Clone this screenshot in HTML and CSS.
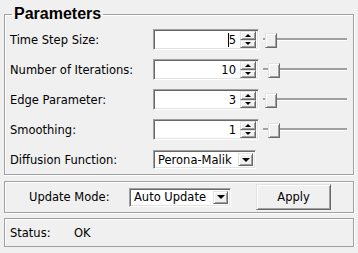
FILE: index.html
```html
<!DOCTYPE html>
<html>

<head>
    <meta content="text/html; charset=utf-8" http-equiv="Content-Type">
    <title>Diffusion filter</title>
    <link rel="stylesheet" href="styles.css">
</head>

<body>
    <div class="panel">
        <fieldset class="params">
            <legend>Parameters</legend>
            <div class="paramGrid">
                <label>Time Step Size:</label>
                <div class="spin"><span class="caret"></span><span class="val">5</span><span class="arrows"><b class="up"></b><b class="down"></b></span></div>
                <div class="slider"><span class="thumb" style="margin-left:2px"></span></div>

                <label>Number of Iterations:</label>
                <div class="spin"><span class="val">10</span><span class="arrows"><b class="up"></b><b class="down"></b></span></div>
                <div class="slider"><span class="thumb" style="margin-left:5px"></span></div>

                <label>Edge Parameter:</label>
                <div class="spin"><span class="val">3</span><span class="arrows"><b class="up"></b><b class="down"></b></span></div>
                <div class="slider"><span class="thumb" style="margin-left:2px"></span></div>

                <label>Smoothing:</label>
                <div class="spin"><span class="val">1</span><span class="arrows"><b class="up"></b><b class="down"></b></span></div>
                <div class="slider"><span class="thumb" style="margin-left:5px"></span></div>

                <label>Diffusion Function:</label>
                <div class="combo funcCombo"><span class="comboText">Perona-Malik</span><b class="drop"></b></div>
            </div>
        </fieldset>

        <div class="frame updateBar">
            <span class="updateLabel">Update Mode:</span>
            <div class="combo modeCombo"><span class="comboText">Auto Update</span><b class="drop"></b></div>
            <button class="applyBtn">Apply</button>
        </div>

        <div class="frame statusBar">
            <span class="statusLabel">Status:</span>
            <span>OK</span>
        </div>
    </div>
</body>

</html>
```

FILE: styles.css
```css
body {
    margin: 0;
    padding: 5px 0 0 4px;
    background: #f0f0f0;
    font-family: "DejaVu Sans", sans-serif;
    font-size: 11.5px;
    color: #000;
}

.panel {
    width: 350px;
}

/* group box */
.params {
    margin: 0;
    padding: 6px 5px 4px 5px;
    border: 1px solid #a0a0a0;
    box-shadow: inset 1px 1px #fff, 1px 1px #fff;
}

.params legend {
    margin-left: 2px;
    padding: 0 2px;
    font-family: "Liberation Sans", Arial, sans-serif;
    font-weight: bold;
    font-size: 16px;
    line-height: 18px;
}

.paramGrid {
    display: grid;
    grid-template-columns: 139px 106px 84px;
    grid-auto-rows: 21px;
    row-gap: 9px;
    column-gap: 4px;
    align-items: center;
}

.paramGrid label {
    grid-column: 1;
}

/* sunken edit field */
.spin,
.combo {
    box-sizing: border-box;
    background: #fff;
    border: 1px solid;
    border-color: #a0a0a0 #fff #fff #a0a0a0;
    box-shadow: inset 1px 1px #696969, inset -1px -1px #e3e3e3;
    display: flex;
    align-items: center;
}

.spin {
    width: 106px;
    height: 21px;
    padding: 2px;
    justify-content: flex-end;
}

.spin .val {
    margin-right: 4px;
}

.caret {
    width: 1px;
    height: 14px;
    background: #000;
}

.arrows {
    display: flex;
    flex-direction: column;
    width: 16px;
    height: 17px;
}

.arrows b,
.drop,
.thumb,
.applyBtn {
    box-sizing: border-box;
    background: #f0f0f0;
    border: 1px solid;
    border-color: #e3e3e3 #696969 #696969 #e3e3e3;
    box-shadow: inset 1px 1px #fff, inset -1px -1px #a0a0a0;
}

.arrows b {
    flex: 1;
    display: flex;
    align-items: center;
    justify-content: center;
}

.arrows .up::after {
    content: "";
    border-left: 3px solid transparent;
    border-right: 3px solid transparent;
    border-bottom: 3px solid #000;
}

.arrows .down::after {
    content: "";
    border-left: 3px solid transparent;
    border-right: 3px solid transparent;
    border-top: 3px solid #000;
}

.drop::after {
    content: "";
    border-left: 4px solid transparent;
    border-right: 4px solid transparent;
    border-top: 4px solid #000;
}

/* trackbar */
.slider {
    position: relative;
    height: 21px;
    display: flex;
    align-items: center;
}

.slider::before {
    content: "";
    position: absolute;
    left: 0;
    right: 0;
    top: 9px;
    height: 1px;
    background: #a0a0a0;
    border-top: 1px solid #a0a0a0;
    border-bottom: 1px solid #fff;
}

.thumb {
    position: relative;
    width: 12px;
    height: 15px;
    margin-top: 2px;
}

/* combos */
.combo {
    padding: 2px;
}

.comboText {
    flex: 1;
    padding-left: 2px;
}

.drop {
    display: flex;
    align-items: center;
    justify-content: center;
    width: 15px;
    height: 100%;
}

.funcCombo {
    grid-column: 2;
    width: 103px;
    height: 19px;
}

/* lower frames */
.frame {
    box-sizing: border-box;
    border: 1px solid #a0a0a0;
    box-shadow: inset 1px 1px #fff, 1px 1px #fff;
    display: flex;
    align-items: center;
}

.updateBar {
    margin-top: 6px;
    height: 32px;
    padding-left: 24px;
}

.updateLabel {
    width: 100px;
}

.modeCombo {
    width: 102px;
    height: 19px;
}

.applyBtn {
    margin-left: 25px;
    width: 75px;
    height: 26px;
    padding: 0;
    font-family: inherit;
    font-size: inherit;
    color: #000;
}

.statusBar {
    margin-top: 5px;
    height: 29px;
    padding-left: 5px;
}

.statusLabel {
    width: 64px;
}
```
